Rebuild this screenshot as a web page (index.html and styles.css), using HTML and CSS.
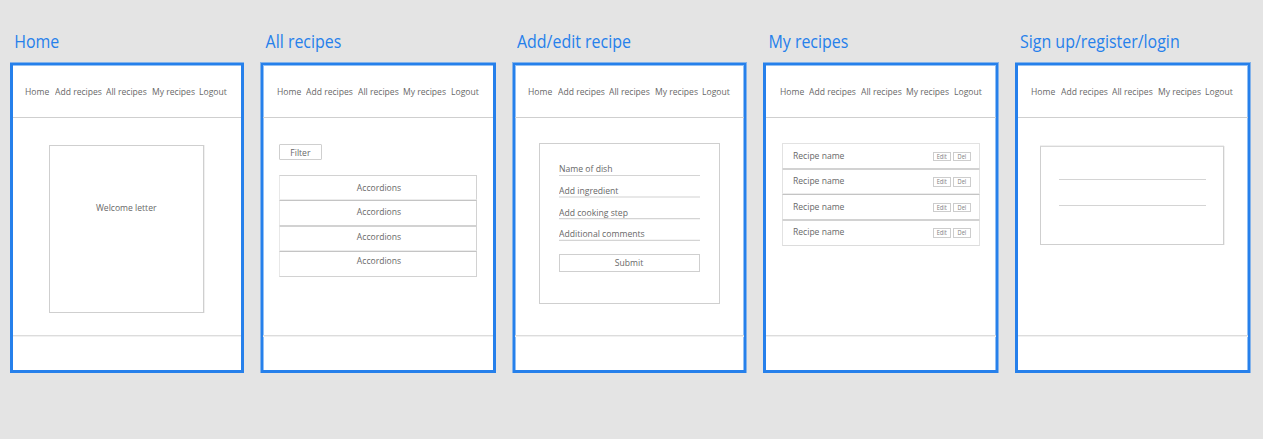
FILE: index.html
```
<!DOCTYPE html>
<html lang="en">
<head>
<meta charset="utf-8">
<title>Recipe wireframes</title>
<link rel="stylesheet" href="styles.css">
</head>
<body>
<main class="board">
  <section class="artboard home">
    <h2 class="title">Home</h2>
    <div class="frame"><div class="screen">
      <nav class="nav"><span class="n1">Home</span><span class="n2">Add recipes</span><span class="n3">All recipes</span><span class="n4">My recipes</span><span class="n5">Logout</span></nav>
      <div class="content"><div class="welcome"><span>Welcome letter</span></div></div>
      <footer class="footer"></footer>
    </div></div>
  </section>
  <section class="artboard all">
    <h2 class="title">All recipes</h2>
    <div class="frame"><div class="screen">
      <nav class="nav"><span class="n1">Home</span><span class="n2">Add recipes</span><span class="n3">All recipes</span><span class="n4">My recipes</span><span class="n5">Logout</span></nav>
      <div class="content">
        <div class="filter"><span>Filter</span></div>
        <div class="accordions">
          <div class="accordion"><span>Accordions</span></div>
          <div class="accordion tall"><span>Accordions</span></div>
          <div class="accordion third"><span>Accordions</span></div>
          <div class="accordion tall last"><span>Accordions</span></div>
        </div>
      </div>
      <footer class="footer"></footer>
    </div></div>
  </section>
  <section class="artboard edit">
    <h2 class="title">Add/edit recipe</h2>
    <div class="frame"><div class="screen">
      <nav class="nav"><span class="n1">Home</span><span class="n2">Add recipes</span><span class="n3">All recipes</span><span class="n4">My recipes</span><span class="n5">Logout</span></nav>
      <div class="content">
        <div class="form">
          <div class="field f1"><span>Name of dish</span></div>
          <div class="field f2"><span>Add ingredient</span></div>
          <div class="field f3"><span>Add cooking step</span></div>
          <div class="field f4"><span>Additional comments</span></div>
          <div class="submit"><span>Submit</span></div>
        </div>
      </div>
      <footer class="footer"></footer>
    </div></div>
  </section>
  <section class="artboard mine">
    <h2 class="title">My recipes</h2>
    <div class="frame"><div class="screen">
      <nav class="nav"><span class="n1">Home</span><span class="n2">Add recipes</span><span class="n3">All recipes</span><span class="n4">My recipes</span><span class="n5">Logout</span></nav>
      <div class="content">
        <div class="recipes">
          <div class="recipe"><span class="name">Recipe name</span><div class="btn"><span>Edit</span></div><div class="btn"><span>Del</span></div></div>
          <div class="recipe short"><span class="name">Recipe name</span><div class="btn"><span>Edit</span></div><div class="btn"><span>Del</span></div></div>
          <div class="recipe"><span class="name">Recipe name</span><div class="btn"><span>Edit</span></div><div class="btn"><span>Del</span></div></div>
          <div class="recipe"><span class="name">Recipe name</span><div class="btn"><span>Edit</span></div><div class="btn"><span>Del</span></div></div>
        </div>
      </div>
      <footer class="footer"></footer>
    </div></div>
  </section>
  <section class="artboard sign">
    <h2 class="title">Sign up/register/login</h2>
    <div class="frame"><div class="screen">
      <nav class="nav"><span class="n1">Home</span><span class="n2">Add recipes</span><span class="n3">All recipes</span><span class="n4">My recipes</span><span class="n5">Logout</span></nav>
      <div class="content"><div class="login"><div class="line"></div><div class="line"></div></div></div>
      <footer class="footer"></footer>
    </div></div>
  </section>
</main>
</body>
</html>
```

FILE: styles.css
```
* { box-sizing: border-box; }
body {
  margin: 0;
  height: 439px;
  overflow: hidden;
  background: #e4e4e4;
  color: #686868;
  font: 9.7px/12px "Open Sans", "Noto Sans", sans-serif;
  white-space: nowrap;
}
.board {
  display: grid;
  grid-template-columns: 234px 236px 235px 236px 236px;
  column-gap: 16px;
  padding: 30px 0 0 10px;
}
.title {
  margin: 0;
  height: 32px;
  padding-left: var(--title-x);
  color: #2680eb;
  font-size: 17.6px;
  font-weight: 400;
  line-height: 23px;
  transform: scaleX(.907);
  transform-origin: var(--title-x) 0;
}

/* Condensed lettering for all wireframe labels */
.screen span {
  display: inline-block;
  vertical-align: top;
  transform: scaleX(.885);
}
.nav span, .field span, .screen .name { transform-origin: 0 0; }

/* Soft outer edge; the solid stroke and inner edge belong to .screen */
.frame {
  height: 311px;
  border: 0 solid #84b3ea;
  border-top-width: 1px;
}
.screen {
  display: flex;
  flex-direction: column;
  height: 100%;
  background: #fff;
  border: 3px solid #2680eb;
  border-top-width: 2px;
  box-shadow: inset 0 1px #92c0f5;
}
.home { --title-x: 4.2px; --nav-x: 12.1px; }
.all { --title-x: 5.6px; --nav-x: 13.7px; }
.edit { --title-x: 5px; --nav-x: 13px; }
.mine { --title-x: 5.4px; --nav-x: 13.5px; }
.sign { --title-x: 5px; --nav-x: 13px; }
.all .frame, .edit .frame { border-left-width: 1px; }
.edit .frame, .mine .frame, .sign .frame { border-right-width: 1px; }
.all .screen { border-left-width: 2px; box-shadow: inset 1px 1px #92c0f5; }
.edit .screen { border-left-width: 2px; border-right-width: 2px; box-shadow: inset 1px 1px #92c0f5, inset -1px 0 #92c0f5; }
.mine .screen, .sign .screen { border-right-width: 2px; box-shadow: inset -1px 1px #92c0f5; }

.nav {
  display: flex;
  height: 53px;
  padding: 21px 0 0 var(--nav-x);
  border-bottom: 1px solid #cfcfcf;
}
.n1 { width: 29.6px; }
.n2 { width: 51.6px; }
.n3 { width: 45.4px; }
.n4 { width: 47.8px; }
.content { display: flow-root; height: 217px; }
.footer {
  height: 35px;
  border-top: 1px solid #dcdcdc;
  box-shadow: inset 0 1px #f1f1f1;
}

.welcome {
  width: 155px;
  height: 168px;
  margin: 27px 0 0 36px;
  padding-top: 56px;
  border: 1px solid #cfcfcf;
  box-shadow: 1px 0 #f0f0f0;
  text-align: center;
}

.filter {
  width: 43px;
  height: 16px;
  margin: 26px 0 0 16px;
  padding-top: 2px;
  border: 1px solid #cfcfcf;
  border-radius: 1px;
  text-align: center;
}
.accordions { width: 198px; margin: 15px 0 0 16px; }
.accordion {
  height: 25px;
  padding: 6px 0 0 1px;
  border: 1px solid #d2d2d2;
  border-left-color: #e8e8e8;
  border-bottom-color: #ececec;
  text-align: center;
}
.accordion.tall { height: 26px; padding-top: 5px; border-top-color: #c4c4c4; border-bottom-color: #d2d2d2; }
.accordion.third { padding-top: 4px; }
.accordion.last { padding-top: 3px; }

.form {
  width: 181px;
  height: 161px;
  margin: 25px 0 0 24px;
  padding: 19px 19px 0;
  border: 1px solid #cfcfcf;
}
.field { height: 22px; border-bottom: 1px solid #d4d4d4; }
.field span { margin-left: .3px; transform: scaleX(.89); }
.f1 { height: 13px; }
.f2 { padding-top: 9px; border-bottom: 2px solid #e8e8e8; }
.f3 { height: 21px; padding-top: 9px; box-shadow: 0 1px #f4f4f4; }
.f4 { padding-top: 9px; box-shadow: inset 0 -1px #f4f4f4; }
.submit {
  height: 18px;
  margin-top: 13px;
  padding-top: 2px;
  border: 1px solid #cfcfcf;
  text-align: center;
}

.recipes { width: 198px; margin: 25px 0 0 16px; }
.recipe {
  display: flex;
  align-items: flex-start;
  height: 26px;
  padding: 6px 8px 0 10px;
  border: 1px solid #e2e2e2;
  border-bottom-color: #d2d2d2;
}
.recipe:nth-child(even) { padding-top: 5px; }
.recipe + .recipe { border-top-color: #d2d2d2; }
.recipe.short { height: 25px; border-bottom-color: #ececec; }
.recipe.short + .recipe { border-top-color: #c4c4c4; }
.recipe:last-child { border-bottom-color: #dcdcdc; }
.name { flex: 1; }
.btn {
  width: 18px;
  height: 9px;
  margin: 2px 0 0 2px;
  border: 1px solid #cdcdcd;
  color: #808080;
  font-size: 6.4px;
  line-height: 7px;
  text-align: center;
}
.recipe:nth-child(even) .btn { height: 10px; line-height: 8px; }

.login {
  width: 184px;
  height: 99px;
  margin: 28px 0 0 22px;
  padding: 32px 17px 0 18px;
  border: 1px solid #cfcfcf;
  border-top-color: #d8d8d8;
  box-shadow: 1px 0 #f0f0f0, 0 -1px #f0f0f0;
}
.line { height: 1px; margin-bottom: 25px; background: #d4d4d4; }
```
